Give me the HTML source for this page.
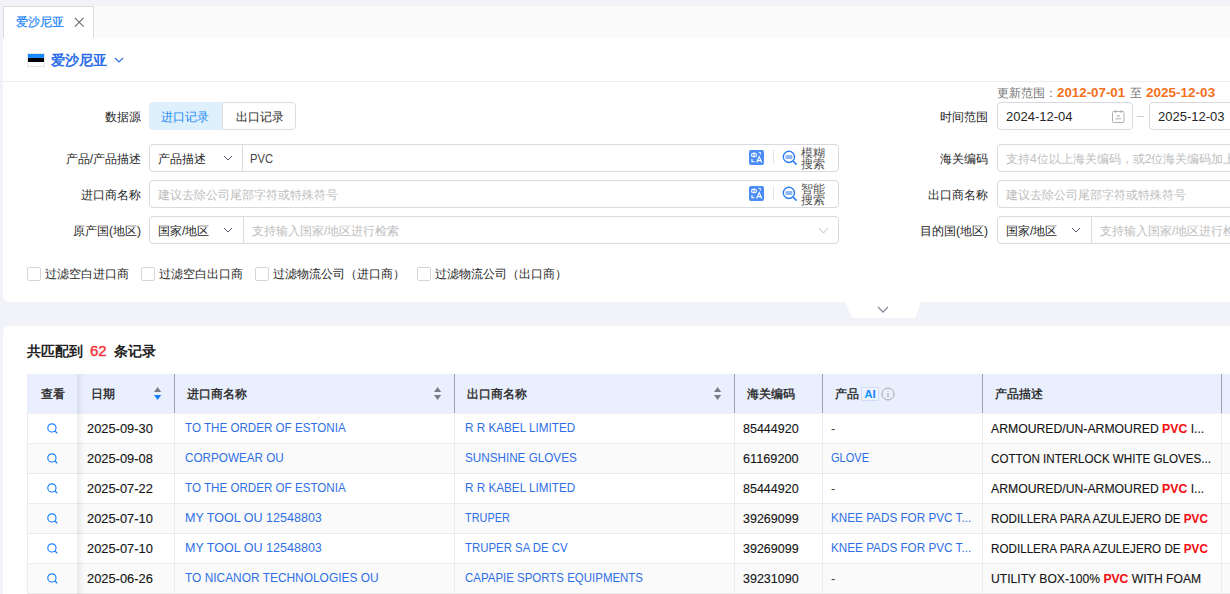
<!DOCTYPE html>
<html><head><meta charset="utf-8">
<style>
*{box-sizing:border-box}
html,body{margin:0;padding:0}
body{width:1230px;height:594px;overflow:hidden;position:relative;background:#f2f3f8;font-family:"Liberation Sans",sans-serif;font-size:13px;color:#222}
.abs{position:absolute}
.tabbar{position:absolute;left:3px;right:0;top:6px;height:32px;background:#fafafa}
.tab{position:absolute;left:3px;top:6px;width:91px;height:32px;background:#fff;border:1px solid #dcdcdc;border-bottom:none}
.tab .t{position:absolute;left:12px;top:7px;font-size:12px;color:#1a84fa;-webkit-text-stroke:0.2px}
.panel1{position:absolute;left:3px;right:0;top:38px;height:264px;background:#fff;border-radius:0 0 0 6px}
.panel2{position:absolute;left:3px;right:0;top:326px;bottom:0;background:#fff;border-radius:6px 0 0 0}
.lbl{position:absolute;font-size:12px;color:#262626;white-space:nowrap;line-height:16px;margin-top:1px}
.box{position:absolute;border:1px solid #d9d9e0;border-radius:4px;background:#fff;height:28px}
.t12{position:absolute;font-size:12px;white-space:nowrap;line-height:16px;color:#262626;margin-top:1px}
.ph{color:#bdbdbd;-webkit-text-stroke:0}
.cb{position:absolute;width:14px;height:14px;border:1px solid #d6d6d6;border-radius:2px;background:#fff}
.hd{position:absolute;top:374px;height:39px;background:#e9effd}
.ht{position:absolute;font-size:12px;-webkit-text-stroke:0.32px #222;color:#222;white-space:nowrap;line-height:16px}
.vsep{position:absolute;width:1px;background:#9ca2b4}
.cell{position:absolute;font-size:13px;white-space:nowrap;line-height:16px;color:#151515;-webkit-text-stroke:0.12px}
.lnk{color:#2f6fe6;-webkit-text-stroke:0}
b.r{color:#f50f14;font-weight:bold}
</style></head>
<body>
<div class="tabbar"></div>
<div class="tab"><span class="t">爱沙尼亚</span>
<svg class="abs" style="left:70px;top:10px" width="11" height="11" viewBox="0 0 11 11"><path d="M0.8 0.8L9.6 9.6M9.6 0.8L0.8 9.6" stroke="#6a6a6a" stroke-width="1.05" fill="none"/></svg>
</div>
<div class="panel1"></div>
<div class="abs" style="left:27px;top:53px;width:18px;height:14px;border:1px solid #e2e4ea">
  <div style="height:4px;background:#1a8cff"></div><div style="height:4px;background:#000"></div><div style="height:4px;background:#fff"></div>
</div>
<div class="abs" style="left:51px;top:52px;font-size:14px;font-weight:bold;color:#2b6de8;line-height:16px">爱沙尼亚</div>
<svg class="abs" style="left:114px;top:57px" width="10" height="6" viewBox="0 0 10 6"><path d="M1 1L5.0 5L9 1" stroke="#2b6de8" stroke-width="1.1" fill="none"/></svg><div class="abs" style="left:3px;right:0;top:81px;height:1px;background:#ebebeb"></div>
<div class="lbl" style="right:1089px;top:108px">数据源</div>
<div class="lbl" style="right:1089px;top:150px">产品/产品描述</div>
<div class="lbl" style="right:1089px;top:186px">进口商名称</div>
<div class="lbl" style="right:1089px;top:222px">原产国(地区)</div>
<div class="abs" style="left:149px;top:102px;width:74px;height:28px;background:#def0fb;border-radius:4px 0 0 4px"></div><div class="abs" style="left:222px;top:102px;width:74px;height:28px;border:1px solid #dcdcdc;border-radius:0 4px 4px 0;background:#fff"></div><div class="t12" style="left:161px;top:108px;color:#1a8af8">进口记录</div><div class="t12" style="left:236px;top:108px">出口记录</div>
<div class="box" style="left:149px;top:144px;width:690px"></div><div class="abs" style="left:242px;top:145px;width:1px;height:26px;background:#d9d9e0"></div><div class="t12" style="left:158px;top:150px">产品描述</div><svg class="abs" style="left:223px;top:155px" width="10" height="6" viewBox="0 0 10 6"><path d="M1 1L5.0 5L9 1" stroke="#666678" stroke-width="1" fill="none"/></svg><div class="t12" style="left:250px;top:150px;font-size:13px;color:#454545;transform:scaleX(0.86);transform-origin:0 0">PVC</div><svg class="abs" style="left:749px;top:150px" width="15" height="15" viewBox="0 0 15 15"><rect x="0" y="0" width="15" height="15" rx="2" fill="#4a8cf4"/>
<path d="M2.7 3.6H7.3V6.4H2.7Z" stroke="#fff" stroke-width="1" fill="none"/><path d="M5 2V7.6" stroke="#fff" stroke-width="1"/><path d="M3 9V11.8H5.6" stroke="#fff" stroke-width="1.1" fill="none"/>
<path d="M7.6 12.6L10.2 6.6L12.8 12.6M8.6 10.6H11.8" stroke="#fff" stroke-width="1.15" fill="none"/><path d="M9.4 2.2L11.6 2.6L11.2 4.6" stroke="#fff" stroke-width="0.9" fill="none"/></svg><div class="abs" style="left:773px;top:150px;width:1px;height:14px;background:#e6e6e6"></div><svg class="abs" style="left:782px;top:150px" width="16" height="16" viewBox="0 0 16 16"><circle cx="6.9" cy="6.9" r="5.6" stroke="#2f7ef0" stroke-width="1.4" fill="none"/><rect x="3.4" y="4.9" width="7" height="4.2" rx="1.4" fill="#8fb9f6"/><path d="M10.9 10.9L14.6 14.6" stroke="#2f7ef0" stroke-width="1.5"/></svg><div class="abs" style="left:801px;top:148px;font-size:12px;line-height:11px;color:#555;white-space:nowrap">模糊<br>搜索</div>
<div class="box" style="left:149px;top:180px;width:690px"></div><div class="t12 ph" style="left:158px;top:186px">建议去除公司尾部字符或特殊符号</div><svg class="abs" style="left:749px;top:186px" width="15" height="15" viewBox="0 0 15 15"><rect x="0" y="0" width="15" height="15" rx="2" fill="#4a8cf4"/>
<path d="M2.7 3.6H7.3V6.4H2.7Z" stroke="#fff" stroke-width="1" fill="none"/><path d="M5 2V7.6" stroke="#fff" stroke-width="1"/><path d="M3 9V11.8H5.6" stroke="#fff" stroke-width="1.1" fill="none"/>
<path d="M7.6 12.6L10.2 6.6L12.8 12.6M8.6 10.6H11.8" stroke="#fff" stroke-width="1.15" fill="none"/><path d="M9.4 2.2L11.6 2.6L11.2 4.6" stroke="#fff" stroke-width="0.9" fill="none"/></svg><div class="abs" style="left:773px;top:186px;width:1px;height:14px;background:#e6e6e6"></div><svg class="abs" style="left:782px;top:186px" width="16" height="16" viewBox="0 0 16 16"><circle cx="6.9" cy="6.9" r="5.6" stroke="#2f7ef0" stroke-width="1.4" fill="none"/><rect x="3.4" y="4.9" width="7" height="4.2" rx="1.4" fill="#8fb9f6"/><path d="M10.9 10.9L14.6 14.6" stroke="#2f7ef0" stroke-width="1.5"/></svg><div class="abs" style="left:801px;top:184px;font-size:12px;line-height:11px;color:#555;white-space:nowrap">智能<br>搜索</div>
<div class="box" style="left:149px;top:216px;width:690px"></div><div class="abs" style="left:243px;top:217px;width:1px;height:26px;background:#d9d9e0"></div><div class="t12" style="left:158px;top:222px">国家/地区</div><svg class="abs" style="left:223px;top:227px" width="10" height="6" viewBox="0 0 10 6"><path d="M1 1L5.0 5L9 1" stroke="#666678" stroke-width="1" fill="none"/></svg><div class="t12 ph" style="left:252px;top:222px">支持输入国家/地区进行检索</div><svg class="abs" style="left:818px;top:227px" width="11" height="7" viewBox="0 0 11 7"><path d="M1 1L5.5 6L10 1" stroke="#bbb" stroke-width="1" fill="none"/></svg><div class="t12" style="left:997px;top:84px;color:#777;-webkit-text-stroke:0">更新范围：</div><div class="t12" style="left:1057px;top:84px;font-size:13px;font-weight:bold;color:#f2711c;-webkit-text-stroke:0;transform:scaleX(1.025);transform-origin:0 0">2012-07-01</div><div class="t12" style="left:1130px;top:84px;color:#777;-webkit-text-stroke:0">至</div><div class="t12" style="left:1146px;top:84px;font-size:13px;font-weight:bold;color:#f2711c;-webkit-text-stroke:0;transform:scaleX(1.04);transform-origin:0 0">2025-12-03</div>
<div class="lbl" style="right:242px;top:108px">时间范围</div>
<div class="lbl" style="right:242px;top:150px">海关编码</div>
<div class="lbl" style="right:242px;top:186px">出口商名称</div>
<div class="lbl" style="right:242px;top:222px">目的国(地区)</div>
<div class="box" style="left:997px;top:102px;width:136px"></div><div class="t12" style="left:1006px;top:108px;font-size:13px">2024-12-04</div><svg class="abs" style="left:1112px;top:110px" width="13" height="13" viewBox="0 0 13 13"><rect x="0.5" y="1.5" width="11.5" height="11" rx="1" fill="none" stroke="#b0b0b0"/><path d="M3.5 0V3M9 0V3M4.5 6H8M3.5 8.8H9" stroke="#b0b0b0"/></svg><div class="abs" style="left:1137px;top:116px;width:7px;height:1px;background:#ccc"></div><div class="box" style="left:1149px;top:102px;width:136px"></div><div class="t12" style="left:1158px;top:108px;font-size:13px">2025-12-03</div><div class="box" style="left:997px;top:144px;width:300px"></div><div class="t12 ph" style="left:1006px;top:150px">支持4位以上海关编码，或2位海关编码加上产品描述</div><div class="box" style="left:997px;top:180px;width:300px"></div><div class="t12 ph" style="left:1006px;top:186px">建议去除公司尾部字符或特殊符号</div><div class="box" style="left:997px;top:216px;width:300px"></div><div class="abs" style="left:1091px;top:217px;width:1px;height:26px;background:#d9d9e0"></div><div class="t12" style="left:1006px;top:222px">国家/地区</div><svg class="abs" style="left:1071px;top:227px" width="10" height="6" viewBox="0 0 10 6"><path d="M1 1L5.0 5L9 1" stroke="#666678" stroke-width="1" fill="none"/></svg><div class="t12 ph" style="left:1100px;top:222px">支持输入国家/地区进行检索</div>
<div class="cb" style="left:27px;top:267px"></div><div class="t12" style="left:45px;top:265px">过滤空白进口商</div><div class="cb" style="left:141px;top:267px"></div><div class="t12" style="left:159px;top:265px">过滤空白出口商</div><div class="cb" style="left:255px;top:267px"></div><div class="t12" style="left:273px;top:265px">过滤物流公司（进口商）</div><div class="cb" style="left:417px;top:267px"></div><div class="t12" style="left:435px;top:265px">过滤物流公司（出口商）</div>
<svg class="abs" style="left:840px;top:302px" width="90" height="17" viewBox="0 0 90 17"><path d="M5 0H81L75 16H12Z" fill="#fff"/></svg><svg class="abs" style="left:877px;top:306px" width="12" height="7" viewBox="0 0 12 7"><path d="M1 1L6.0 6L11 1" stroke="#8a8a9e" stroke-width="1.3" fill="none"/></svg><div class="panel2"></div>
<div class="abs" style="left:27px;top:343px;font-size:14px;font-weight:bold;color:#222;line-height:16px;white-space:nowrap">共匹配到<span style="color:#f0353c;font-size:15px;font-weight:normal;-webkit-text-stroke:0.4px #f0353c;margin:0 7px 0 7px">62</span>条记录</div>
<div class="hd" style="left:27px;width:1203px"></div><div class="abs" style="left:27px;top:413px;width:1203px;height:1px;background:#f0f0f0"></div><div class="vsep" style="left:174px;top:374px;height:39px"></div><div class="vsep" style="left:454px;top:374px;height:39px"></div><div class="vsep" style="left:734px;top:374px;height:39px"></div><div class="vsep" style="left:822px;top:374px;height:39px"></div><div class="vsep" style="left:982px;top:374px;height:39px"></div><div class="vsep" style="left:1221px;top:374px;height:39px"></div><div class="ht" style="left:41px;top:386px">查看</div><div class="ht" style="left:91px;top:386px">日期</div><div class="ht" style="left:187px;top:386px">进口商名称</div><div class="ht" style="left:467px;top:386px">出口商名称</div><div class="ht" style="left:747px;top:386px">海关编码</div><div class="ht" style="left:835px;top:386px">产品</div><div class="ht" style="left:995px;top:386px">产品描述</div><svg class="abs" style="left:153px;top:386px" width="9" height="15" viewBox="0 0 9 15"><path d="M4.6 1L8.2 6H1Z" fill="#7a7d86"/><path d="M4.6 14L8.2 9H1Z" fill="#1a7cf5"/></svg><svg class="abs" style="left:433px;top:386px" width="9" height="15" viewBox="0 0 9 15"><path d="M4.6 1L8.2 6H1Z" fill="#7a7d86"/><path d="M4.6 14L8.2 9H1Z" fill="#7a7d86"/></svg><svg class="abs" style="left:713px;top:386px" width="9" height="15" viewBox="0 0 9 15"><path d="M4.6 1L8.2 6H1Z" fill="#7a7d86"/><path d="M4.6 14L8.2 9H1Z" fill="#7a7d86"/></svg><div class="abs" style="left:861px;top:387px;width:18px;height:14px;background:#eef4ff;border:1px solid #cfdcfb;border-radius:2px"></div><svg class="abs" style="left:861px;top:387px" width="18" height="14" viewBox="0 0 18 14"><defs><linearGradient id="aig" x1="0" y1="1" x2="1" y2="0"><stop offset="0" stop-color="#12b8f2"/><stop offset="1" stop-color="#1d5cff"/></linearGradient></defs><text x="9" y="11.2" text-anchor="middle" font-family="Liberation Sans" font-weight="bold" font-size="11.5" fill="url(#aig)">AI</text></svg><svg class="abs" style="left:881px;top:387px" width="14" height="14" viewBox="0 0 14 14"><circle cx="7" cy="7" r="6" fill="none" stroke="#aaa"/><path d="M7 6V10.5" stroke="#aaa" stroke-width="1.1"/><circle cx="7" cy="4" r="0.7" fill="#aaa"/></svg>
<div class="abs" style="left:27px;top:414px;width:1203px;height:30px;background:#fff;border-bottom:1px solid #ebebeb"></div><div class="abs" style="left:174px;top:413px;width:1px;height:31px;background:#ebebeb"></div><div class="abs" style="left:454px;top:413px;width:1px;height:31px;background:#ebebeb"></div><div class="abs" style="left:734px;top:413px;width:1px;height:31px;background:#ebebeb"></div><div class="abs" style="left:822px;top:413px;width:1px;height:31px;background:#ebebeb"></div><div class="abs" style="left:982px;top:413px;width:1px;height:31px;background:#ebebeb"></div><div class="abs" style="left:1221px;top:413px;width:1px;height:31px;background:#ebebeb"></div><svg class="abs" style="left:47px;top:423px" width="11" height="11" viewBox="0 0 11 11"><circle cx="4.9" cy="4.9" r="4.1" fill="none" stroke="#1a80f8" stroke-width="1.15"/><path d="M7.8 7.8L10.2 10.2" stroke="#1a80f8" stroke-width="1.25"/></svg><div id="s1" class="cell " style="left:87px;top:421px;transform:scaleX(0.9896);transform-origin:0 0">2025-09-30</div><div id="s2" class="cell lnk" style="left:185px;top:420px;transform:scaleX(0.8933);transform-origin:0 0">TO THE ORDER OF ESTONIA</div><div id="s3" class="cell lnk" style="left:465px;top:420px;transform:scaleX(0.9008);transform-origin:0 0">R R KABEL LIMITED</div><div id="s4" class="cell " style="left:743px;top:421px;transform:scaleX(0.9621);transform-origin:0 0">85444920</div><div id="s5" class="cell " style="left:831px;top:421px"><span style="color:#444;-webkit-text-stroke:0">-</span></div><div id="s6" class="cell " style="left:991px;top:421px;transform:scaleX(0.9401);transform-origin:0 0">ARMOURED/UN-ARMOURED <b class="r">PVC</b> I...</div>
<div class="abs" style="left:27px;top:444px;width:1203px;height:30px;background:#fafafa;border-bottom:1px solid #ebebeb"></div><div class="abs" style="left:174px;top:443px;width:1px;height:31px;background:#ebebeb"></div><div class="abs" style="left:454px;top:443px;width:1px;height:31px;background:#ebebeb"></div><div class="abs" style="left:734px;top:443px;width:1px;height:31px;background:#ebebeb"></div><div class="abs" style="left:822px;top:443px;width:1px;height:31px;background:#ebebeb"></div><div class="abs" style="left:982px;top:443px;width:1px;height:31px;background:#ebebeb"></div><div class="abs" style="left:1221px;top:443px;width:1px;height:31px;background:#ebebeb"></div><svg class="abs" style="left:47px;top:453px" width="11" height="11" viewBox="0 0 11 11"><circle cx="4.9" cy="4.9" r="4.1" fill="none" stroke="#1a80f8" stroke-width="1.15"/><path d="M7.8 7.8L10.2 10.2" stroke="#1a80f8" stroke-width="1.25"/></svg><div id="s7" class="cell " style="left:87px;top:451px;transform:scaleX(0.9896);transform-origin:0 0">2025-09-08</div><div id="s8" class="cell lnk" style="left:185px;top:450px;transform:scaleX(0.9000);transform-origin:0 0">CORPOWEAR OU</div><div id="s9" class="cell lnk" style="left:465px;top:450px;transform:scaleX(0.8992);transform-origin:0 0">SUNSHINE GLOVES</div><div id="s10" class="cell " style="left:743px;top:451px;transform:scaleX(0.9789);transform-origin:0 0">61169200</div><div id="s11" class="cell lnk" style="left:831px;top:450px;transform:scaleX(0.8489);transform-origin:0 0">GLOVE</div><div id="s12" class="cell " style="left:991px;top:451px;transform:scaleX(0.8943);transform-origin:0 0">COTTON INTERLOCK WHITE GLOVES...</div>
<div class="abs" style="left:27px;top:474px;width:1203px;height:30px;background:#fff;border-bottom:1px solid #ebebeb"></div><div class="abs" style="left:174px;top:473px;width:1px;height:31px;background:#ebebeb"></div><div class="abs" style="left:454px;top:473px;width:1px;height:31px;background:#ebebeb"></div><div class="abs" style="left:734px;top:473px;width:1px;height:31px;background:#ebebeb"></div><div class="abs" style="left:822px;top:473px;width:1px;height:31px;background:#ebebeb"></div><div class="abs" style="left:982px;top:473px;width:1px;height:31px;background:#ebebeb"></div><div class="abs" style="left:1221px;top:473px;width:1px;height:31px;background:#ebebeb"></div><svg class="abs" style="left:47px;top:483px" width="11" height="11" viewBox="0 0 11 11"><circle cx="4.9" cy="4.9" r="4.1" fill="none" stroke="#1a80f8" stroke-width="1.15"/><path d="M7.8 7.8L10.2 10.2" stroke="#1a80f8" stroke-width="1.25"/></svg><div id="s13" class="cell " style="left:87px;top:481px;transform:scaleX(0.9896);transform-origin:0 0">2025-07-22</div><div id="s14" class="cell lnk" style="left:185px;top:480px;transform:scaleX(0.8933);transform-origin:0 0">TO THE ORDER OF ESTONIA</div><div id="s15" class="cell lnk" style="left:465px;top:480px;transform:scaleX(0.9008);transform-origin:0 0">R R KABEL LIMITED</div><div id="s16" class="cell " style="left:743px;top:481px;transform:scaleX(0.9621);transform-origin:0 0">85444920</div><div id="s17" class="cell " style="left:831px;top:481px"><span style="color:#444;-webkit-text-stroke:0">-</span></div><div id="s18" class="cell " style="left:991px;top:481px;transform:scaleX(0.9401);transform-origin:0 0">ARMOURED/UN-ARMOURED <b class="r">PVC</b> I...</div>
<div class="abs" style="left:27px;top:504px;width:1203px;height:30px;background:#fafafa;border-bottom:1px solid #ebebeb"></div><div class="abs" style="left:174px;top:503px;width:1px;height:31px;background:#ebebeb"></div><div class="abs" style="left:454px;top:503px;width:1px;height:31px;background:#ebebeb"></div><div class="abs" style="left:734px;top:503px;width:1px;height:31px;background:#ebebeb"></div><div class="abs" style="left:822px;top:503px;width:1px;height:31px;background:#ebebeb"></div><div class="abs" style="left:982px;top:503px;width:1px;height:31px;background:#ebebeb"></div><div class="abs" style="left:1221px;top:503px;width:1px;height:31px;background:#ebebeb"></div><svg class="abs" style="left:47px;top:513px" width="11" height="11" viewBox="0 0 11 11"><circle cx="4.9" cy="4.9" r="4.1" fill="none" stroke="#1a80f8" stroke-width="1.15"/><path d="M7.8 7.8L10.2 10.2" stroke="#1a80f8" stroke-width="1.25"/></svg><div id="s19" class="cell " style="left:87px;top:511px;transform:scaleX(0.9896);transform-origin:0 0">2025-07-10</div><div id="s20" class="cell lnk" style="left:185px;top:510px;transform:scaleX(0.9645);transform-origin:0 0">MY TOOL OU 12548803</div><div id="s21" class="cell lnk" style="left:465px;top:510px;transform:scaleX(0.8377);transform-origin:0 0">TRUPER</div><div id="s22" class="cell " style="left:743px;top:511px;transform:scaleX(0.9621);transform-origin:0 0">39269099</div><div id="s23" class="cell lnk" style="left:831px;top:510px;transform:scaleX(0.9013);transform-origin:0 0">KNEE PADS FOR PVC T...</div><div id="s24" class="cell " style="left:991px;top:511px;transform:scaleX(0.8967);transform-origin:0 0">RODILLERA PARA AZULEJERO DE <b class="r">PVC</b></div>
<div class="abs" style="left:27px;top:534px;width:1203px;height:30px;background:#fff;border-bottom:1px solid #ebebeb"></div><div class="abs" style="left:174px;top:533px;width:1px;height:31px;background:#ebebeb"></div><div class="abs" style="left:454px;top:533px;width:1px;height:31px;background:#ebebeb"></div><div class="abs" style="left:734px;top:533px;width:1px;height:31px;background:#ebebeb"></div><div class="abs" style="left:822px;top:533px;width:1px;height:31px;background:#ebebeb"></div><div class="abs" style="left:982px;top:533px;width:1px;height:31px;background:#ebebeb"></div><div class="abs" style="left:1221px;top:533px;width:1px;height:31px;background:#ebebeb"></div><svg class="abs" style="left:47px;top:543px" width="11" height="11" viewBox="0 0 11 11"><circle cx="4.9" cy="4.9" r="4.1" fill="none" stroke="#1a80f8" stroke-width="1.15"/><path d="M7.8 7.8L10.2 10.2" stroke="#1a80f8" stroke-width="1.25"/></svg><div id="s25" class="cell " style="left:87px;top:541px;transform:scaleX(0.9896);transform-origin:0 0">2025-07-10</div><div id="s26" class="cell lnk" style="left:185px;top:540px;transform:scaleX(0.9645);transform-origin:0 0">MY TOOL OU 12548803</div><div id="s27" class="cell lnk" style="left:465px;top:540px;transform:scaleX(0.8769);transform-origin:0 0">TRUPER SA DE CV</div><div id="s28" class="cell " style="left:743px;top:541px;transform:scaleX(0.9621);transform-origin:0 0">39269099</div><div id="s29" class="cell lnk" style="left:831px;top:540px;transform:scaleX(0.9013);transform-origin:0 0">KNEE PADS FOR PVC T...</div><div id="s30" class="cell " style="left:991px;top:541px;transform:scaleX(0.8967);transform-origin:0 0">RODILLERA PARA AZULEJERO DE <b class="r">PVC</b></div>
<div class="abs" style="left:27px;top:564px;width:1203px;height:30px;background:#fafafa;border-bottom:1px solid #ebebeb"></div><div class="abs" style="left:174px;top:563px;width:1px;height:31px;background:#ebebeb"></div><div class="abs" style="left:454px;top:563px;width:1px;height:31px;background:#ebebeb"></div><div class="abs" style="left:734px;top:563px;width:1px;height:31px;background:#ebebeb"></div><div class="abs" style="left:822px;top:563px;width:1px;height:31px;background:#ebebeb"></div><div class="abs" style="left:982px;top:563px;width:1px;height:31px;background:#ebebeb"></div><div class="abs" style="left:1221px;top:563px;width:1px;height:31px;background:#ebebeb"></div><svg class="abs" style="left:47px;top:573px" width="11" height="11" viewBox="0 0 11 11"><circle cx="4.9" cy="4.9" r="4.1" fill="none" stroke="#1a80f8" stroke-width="1.15"/><path d="M7.8 7.8L10.2 10.2" stroke="#1a80f8" stroke-width="1.25"/></svg><div id="s31" class="cell " style="left:87px;top:571px;transform:scaleX(0.9896);transform-origin:0 0">2025-06-26</div><div id="s32" class="cell lnk" style="left:185px;top:570px;transform:scaleX(0.9166);transform-origin:0 0">TO NICANOR TECHNOLOGIES OU</div><div id="s33" class="cell lnk" style="left:465px;top:570px;transform:scaleX(0.8822);transform-origin:0 0">CAPAPIE SPORTS EQUIPMENTS</div><div id="s34" class="cell " style="left:743px;top:571px;transform:scaleX(0.9621);transform-origin:0 0">39231090</div><div id="s35" class="cell " style="left:831px;top:571px"><span style="color:#444;-webkit-text-stroke:0">-</span></div><div id="s36" class="cell " style="left:991px;top:571px;transform:scaleX(0.9333);transform-origin:0 0">UTILITY BOX-100% <b class="r">PVC</b> WITH FOAM</div>
<div class="abs" style="left:27px;top:413px;width:1px;height:181px;background:#ebebeb"></div><div class="abs" style="left:77px;top:374px;width:8px;height:220px;background:linear-gradient(to right,rgba(20,30,80,0.09),rgba(20,30,80,0.03) 50%,rgba(20,30,80,0))"></div></body></html>
